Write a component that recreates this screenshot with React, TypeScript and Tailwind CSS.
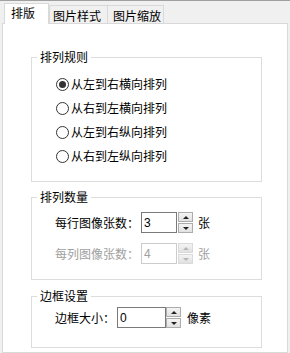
import React, { useState } from 'react';

const Spinner: React.FC<{ disabled?: boolean }> = ({ disabled }) => {
  const edge = disabled ? 'border-[#dadada]' : 'border-[#acacac]';
  const arrow = disabled ? 'border-b-[#b5b5b5]' : 'border-b-[#222]';
  const arrowDown = disabled ? 'border-t-[#b5b5b5]' : 'border-t-[#222]';
  return (
    <div className="flex flex-col w-[15px] h-[21px] gap-px">
      <div className={`flex-1 flex items-center justify-center border ${edge} bg-gradient-to-b from-[#f4f4f4] to-[#e1e1e1]`}>
        <div className={`w-0 h-0 border-l-[3px] border-r-[3px] border-b-[3px] border-l-transparent border-r-transparent ${arrow}`} />
      </div>
      <div className={`flex-1 flex items-center justify-center border ${edge} bg-gradient-to-b from-[#f4f4f4] to-[#e1e1e1]`}>
        <div className={`w-0 h-0 border-l-[3px] border-r-[3px] border-t-[3px] border-l-transparent border-r-transparent ${arrowDown}`} />
      </div>
    </div>
  );
};

const Radio: React.FC<{ label: string; checked: boolean; onClick: () => void }> = ({ label, checked, onClick }) => (
  <div className="flex items-center h-[24px] cursor-default" onClick={onClick}>
    <div className="w-[13px] h-[13px] rounded-full border border-[#333] bg-white flex items-center justify-center">
      {checked && <div className="w-[7px] h-[7px] rounded-full bg-[#333]" />}
    </div>
    <span className="ml-[2px]">{label}</span>
  </div>
);

const Group: React.FC<{ title: string; className: string; children: React.ReactNode }> = ({ title, className, children }) => (
  <fieldset className={`w-[231px] border border-[#dcdcdc] ${className}`}>
    <legend className="ml-[5px] px-[3px] leading-[14px]">{title}</legend>
    {children}
  </fieldset>
);

const App: React.FC = () => {
  const [order, setOrder] = useState(0);
  const orders = ['从左到右横向排列', '从右到左横向排列', '从左到右纵向排列', '从右到左纵向排列'];

  return (
    <div className="w-[290px] h-[353px] overflow-hidden flex flex-col bg-[#f0f0f0] border-t border-[#a0a0a0] text-[12px] text-black font-['Noto_Sans_CJK_SC','Noto_Sans_CJK_JP',sans-serif]">
      {/* Tabs */}
      <div className="flex items-end h-[22px] pl-[4px] shrink-0">
        <div className="relative z-10 -mb-px h-[21px] w-[45px] bg-white border-l border-t border-r border-[#d9d9d9] pl-[6px] pt-[2px] leading-[14px]">
          排版
        </div>
        <div className="h-[18px] w-[58px] border-l border-t border-[#d9d9d9] pl-[3px] pt-[3px] leading-[14px]">
          图片样式
        </div>
        <div className="h-[18px] w-[57px] border-l border-t border-r border-[#d9d9d9] pl-[5px] pt-[3px] leading-[14px]">
          图片缩放
        </div>
      </div>

      {/* Panel */}
      <div className="flex-1 ml-[2px] w-[286px] bg-white border border-[#d9d9d9] pl-[28px] pt-[26px] flex flex-col">
        <Group title="排列规则" className="h-[132px]">
          <div className="flex flex-col pt-[8px] pl-[24px]">
            {orders.map((o, i) => (
              <Radio key={o} label={o} checked={order === i} onClick={() => setOrder(i)} />
            ))}
          </div>
        </Group>

        <Group title="排列数量" className="h-[90px] mt-[8px]">
          <div className="flex flex-col pt-[8px] pl-[23px] gap-[10px]">
            <div className="flex items-center h-[21px]">
              <span className="w-[86px]">每行图像张数：</span>
              <div className="w-[36px] h-[21px] border border-[#7a7a7a] pl-[2px] flex items-center font-['Liberation_Sans',sans-serif]">3</div>
              <div className="ml-px"><Spinner /></div>
              <span className="ml-[5px]">张</span>
            </div>
            <div className="flex items-center h-[21px] text-[#a0a0a0]">
              <span className="w-[86px]">每列图像张数：</span>
              <div className="w-[36px] h-[21px] border border-[#cccccc] pl-[2px] flex items-center font-['Liberation_Sans',sans-serif]">4</div>
              <div className="ml-px"><Spinner disabled /></div>
              <span className="ml-[5px]">张</span>
            </div>
          </div>
        </Group>

        <Group title="边框设置" className="h-[59px] mt-[9px]">
          <div className="flex items-center h-[21px] mt-[4px] pl-[23px]">
            <span className="w-[62px]">边框大小：</span>
            <div className="w-[49px] h-[21px] border border-[#7a7a7a] pl-[2px] flex items-center font-['Liberation_Sans',sans-serif]">0</div>
            <div><Spinner /></div>
            <span className="ml-[6px]">像素</span>
          </div>
        </Group>
      </div>
    </div>
  );
};

export default App;
